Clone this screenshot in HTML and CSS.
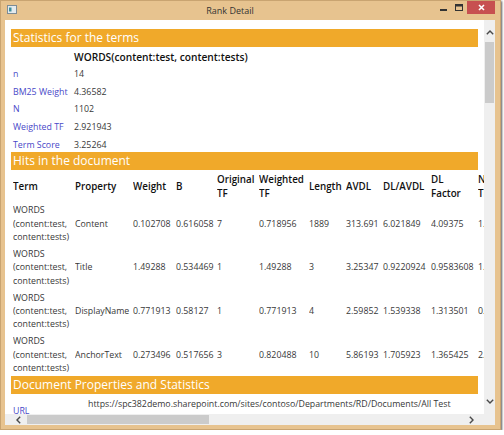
FILE: index.html
```html
<!DOCTYPE html>
<html>
<head>
  <meta charset="utf-8">
  <title>Rank Detail</title>
  <link rel="stylesheet" href="styles.css">
</head>
<body>
  <div class="window">
    <div class="titlebar">
      <svg class="app-icon" width="10" height="9" viewBox="0 0 10 9">
        <rect x="0.5" y="0.5" width="9" height="8" fill="#e4eaee" stroke="#7d8c96"/>
        <rect x="2" y="2.5" width="2.5" height="4" fill="#3f8f9c"/>
      </svg>
      <span class="title">Rank Detail</span>
      <div class="caption">
        <span class="cap-btn"><svg width="7" height="7" viewBox="0 0 7 7"><rect x="0" y="5" width="7" height="2" fill="#333"/></svg></span>
        <span class="cap-btn"><svg width="8" height="7" viewBox="0 0 8 7"><rect x="0.5" y="0.5" width="7" height="6" fill="none" stroke="#333"/><rect x="0.5" y="0.5" width="7" height="2" fill="#333"/></svg></span>
        <span class="cap-close"><svg width="7" height="7" viewBox="0 0 7 7"><path d="M1 1 L6 6 M6 1 L1 6" stroke="#fff" stroke-width="1.6"/></svg></span>
      </div>
    </div>

    <div class="client">
      <div class="client-main">
        <div class="viewport">
          <div class="section">Statistics for the terms</div>
          <table class="stats">
            <tr class="stats-head"><td></td><th>WORDS(content:test, content:tests)</th></tr>
            <tr><td class="label">n</td><td>14</td></tr>
            <tr><td class="label">BM25 Weight</td><td>4.36582</td></tr>
            <tr><td class="label">N</td><td>1102</td></tr>
            <tr><td class="label">Weighted TF</td><td>2.921943</td></tr>
            <tr><td class="label">Term Score</td><td>3.25264</td></tr>
          </table>

          <div class="section">Hits in the document</div>
          <table class="hits">
            <colgroup>
              <col style="width:62px"><col style="width:58px"><col style="width:43px"><col style="width:41px">
              <col style="width:42px"><col style="width:50px"><col style="width:37px"><col style="width:37px">
              <col style="width:48px"><col style="width:47px"><col style="width:50px"><col style="width:50px">
            </colgroup>
            <tr class="hits-head">
              <th>Term</th><th>Property</th><th>Weight</th><th>B</th><th>Original<br>TF</th><th>Weighted<br>TF</th>
              <th>Length</th><th>AVDL</th><th>DL/AVDL</th><th>DL<br>Factor</th><th>Norm<br>TF</th><th>Score</th>
            </tr>
            <tr>
              <td>WORDS<br>(content:test,<br>content:tests)</td><td>Content</td><td>0.102708</td><td>0.616058</td><td>7</td>
              <td>0.718956</td><td>1889</td><td>313.691</td><td>6.021849</td><td>4.09375</td><td>1.756214</td><td>0.180379</td>
            </tr>
            <tr>
              <td>WORDS<br>(content:test,<br>content:tests)</td><td>Title</td><td>1.49288</td><td>0.534469</td><td>1</td>
              <td>1.49288</td><td>3</td><td>3.25347</td><td>0.9220924</td><td>0.9583608</td><td>1.557730</td><td>2.325604</td>
            </tr>
            <tr>
              <td>WORDS<br>(content:test,<br>content:tests)</td><td>DisplayName</td><td>0.771913</td><td>0.58127</td><td>1</td>
              <td>0.771913</td><td>4</td><td>2.59852</td><td>1.539338</td><td>1.313501</td><td>0.587676</td><td>0.453640</td>
            </tr>
            <tr>
              <td>WORDS<br>(content:test,<br>content:tests)</td><td>AnchorText</td><td>0.273496</td><td>0.517656</td><td>3</td>
              <td>0.820488</td><td>10</td><td>5.86193</td><td>1.705923</td><td>1.365425</td><td>2.197213</td><td>0.600924</td>
            </tr>
          </table>

          <div class="section">Document Properties and Statistics</div>
          <table class="props">
            <tr>
              <td class="label">URL</td>
              <td class="value">https://spc382demo.sharepoint.com/sites/contoso/Departments/RD/Documents/All Test Cases/RankTest.docx</td>
            </tr>
            <tr>
              <td class="label">Size</td>
              <td class="value">48213</td>
            </tr>
          </table>
        </div>

        <div class="vscroll">
          <div class="arrow up"><svg width="8" height="5" viewBox="0 0 8 5"><path d="M0.8 4.2 L4 1 L7.2 4.2" fill="none" stroke="#4a4a4a" stroke-width="1.4"/></svg></div>
          <div class="vthumb"></div>
          <div class="track"></div>
          <div class="arrow down"><svg width="8" height="5" viewBox="0 0 8 5"><path d="M0.8 0.8 L4 4 L7.2 0.8" fill="none" stroke="#4a4a4a" stroke-width="1.4"/></svg></div>
        </div>
      </div>

      <div class="client-bottom">
        <div class="hscroll">
          <div class="arrow left"><svg width="5" height="8" viewBox="0 0 5 8"><path d="M4.2 0.8 L1 4 L4.2 7.2" fill="none" stroke="#4a4a4a" stroke-width="1.4"/></svg></div>
          <div class="hthumb"></div>
          <div class="track"></div>
          <div class="arrow right"><svg width="5" height="8" viewBox="0 0 5 8"><path d="M0.8 0.8 L4 4 L0.8 7.2" fill="none" stroke="#4a4a4a" stroke-width="1.4"/></svg></div>
        </div>
        <div class="corner"></div>
      </div>
    </div>
  </div>
</body>
</html>
```

FILE: styles.css
```css
html, body {
  margin: 0;
  padding: 0;
  background: #fff;
  font-family: "Open Sans", "Noto Sans", sans-serif;
}

.window {
  width: 501px;
  height: 430px;
  box-sizing: border-box;
  background: #e7c38f;
  border: 1px solid #c9a471;
  padding: 0 5px 4px 4px;
  display: flex;
  flex-direction: column;
  box-shadow: 1px 1px 2px rgba(0, 0, 0, 0.65);
}

/* title bar */
.titlebar {
  height: 19px;
  flex: none;
  display: flex;
  align-items: center;
}
.app-icon {
  margin-left: 2px;
  margin-top: -2px;
}
.title {
  flex: 1;
  text-align: center;
  font-size: 9px;
  color: #333;
  margin-left: 8px;
}
.caption {
  display: flex;
  align-self: flex-start;
  height: 14px;
}
.cap-btn {
  width: 16px;
  display: flex;
  align-items: center;
  justify-content: center;
  margin-top: -2px;
}
.cap-close {
  width: 28px;
  height: 13px;
  background: #c75050;
  display: flex;
  align-items: center;
  justify-content: center;
}

/* client area */
.client {
  height: 405px;
  flex: none;
  display: flex;
  flex-direction: column;
  background: #fff;
  overflow: hidden;
}
.client-main {
  height: 394px;
  display: flex;
}
.client-bottom {
  height: 11px;
  display: flex;
}
.viewport {
  flex: 1;
  min-width: 0;
  overflow: hidden;
  padding-top: 9px;
  font-size: 8.8px;
  color: #383838;
}

.section {
  background: #f0a92a;
  color: #fff;
  font-size: 12px;
  height: 18px;
  line-height: 18px;
  margin: 0 6px;
  padding-left: 2px;
  white-space: nowrap;
  overflow: hidden;
}

table {
  border-collapse: collapse;
  margin-left: 8px;
}
td, th {
  padding: 3px 0 0 0;
  text-align: left;
  vertical-align: middle;
  white-space: nowrap;
}
th {
  font-weight: 600;
  color: #111;
  font-size: 9.8px;
}
.label {
  color: #4848c8;
}

/* term statistics */
.stats td:first-child {
  width: 61px;
}
.stats tr {
  height: 17.6px;
}
.stats tr.stats-head {
  height: 16px;
}
.stats th {
  font-size: 10.2px;
}

/* hits table */
.hits {
  table-layout: fixed;
  width: 565px;
  line-height: 13.3px;
}
.hits tr {
  height: 43.7px;
}
.hits tr.hits-head {
  height: 31px;
  line-height: 14px;
}
.hits td, .hits th {
  overflow: hidden;
}

/* document properties */
.props {
  margin-top: 3px;
  line-height: 14px;
}
.props td {
  padding: 0;
}
.props .label {
  width: 75px;
}
.props .value {
  width: 385px;
  white-space: normal;
}

/* scrollbars */
.vscroll, .hscroll, .corner {
  background: #efefef;
}
.vscroll {
  width: 11px;
  flex: none;
  display: flex;
  flex-direction: column;
}
.hscroll {
  flex: 1;
  display: flex;
}
.corner {
  width: 11px;
}
.track {
  flex: 1;
}
.arrow {
  display: flex;
  justify-content: center;
  flex: none;
}
.arrow.up {
  height: 21px;
  align-items: flex-end;
  padding-bottom: 6px;
  box-sizing: border-box;
}
.arrow.down {
  height: 22px;
  align-items: flex-start;
  padding-top: 7px;
  box-sizing: border-box;
}
.arrow.left, .arrow.right {
  width: 22px;
  align-items: center;
}
.arrow.left {
  justify-content: flex-end;
  padding-right: 6px;
  box-sizing: border-box;
}
.arrow.right {
  justify-content: flex-start;
  padding-left: 7px;
  box-sizing: border-box;
}
.vthumb {
  margin: 1px 1px 0 1px;
  height: 61px;
  flex: none;
  background: #cbcbcb;
}
.hthumb {
  margin: 1px 0;
  width: 182px;
  flex: none;
  background: #cbcbcb;
}
```
